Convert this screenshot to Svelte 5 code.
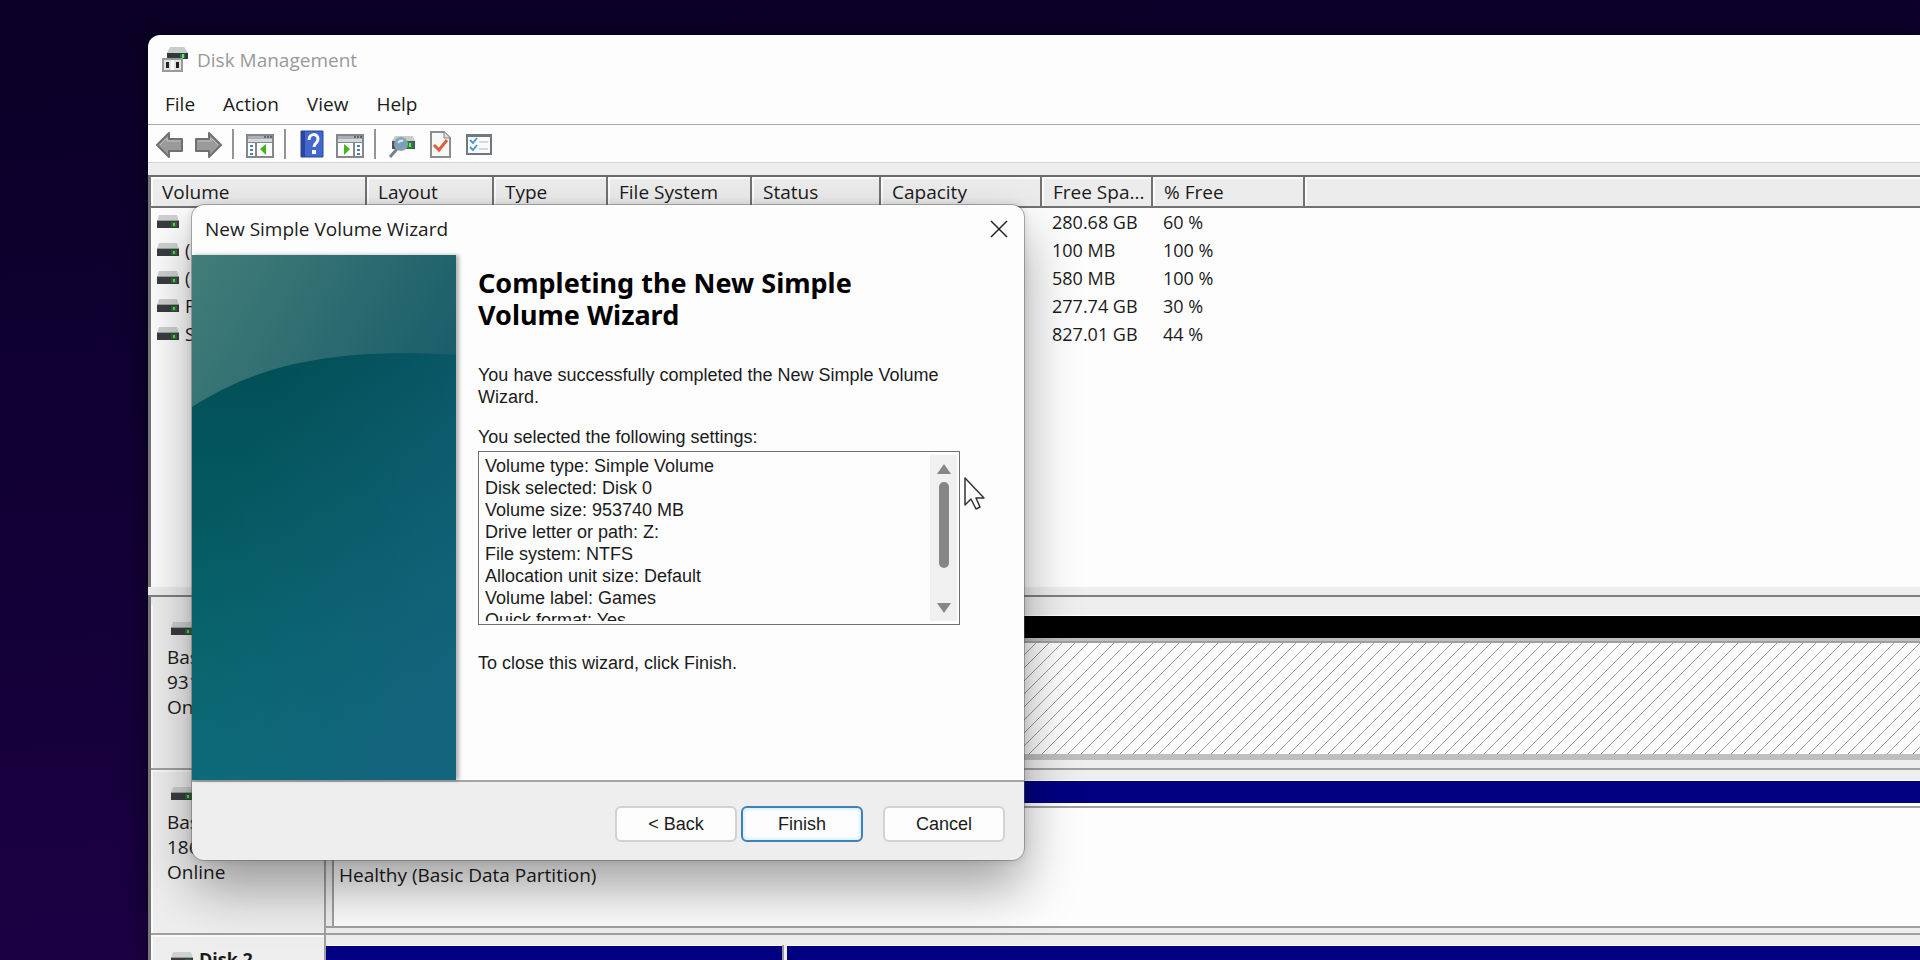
<script lang="ts">
  const menus = ['File', 'Action', 'View', 'Help'];

  const columns = [
    { label: 'Volume', width: 216 },
    { label: 'Layout', width: 127 },
    { label: 'Type', width: 114 },
    { label: 'File System', width: 144 },
    { label: 'Status', width: 129 },
    { label: 'Capacity', width: 161 },
    { label: 'Free Spa...', width: 111 },
    { label: '% Free', width: 152 },
  ];

  const volumes = [
    { name: '', free: '280.68 GB', percent: '60 %' },
    { name: '(', free: '100 MB', percent: '100 %' },
    { name: '(', free: '580 MB', percent: '100 %' },
    { name: 'F', free: '277.74 GB', percent: '30 %' },
    { name: 'S', free: '827.01 GB', percent: '44 %' },
  ];

  const settings = [
    'Volume type: Simple Volume',
    'Disk selected: Disk 0',
    'Volume size: 953740 MB',
    'Drive letter or path: Z:',
    'File system: NTFS',
    'Allocation unit size: Default',
    'Volume label: Games',
    'Quick format: Yes',
  ];
</script>

{#snippet drive()}
  <svg class="drive" viewBox="0 0 22 14" aria-hidden="true">
    <path d="M2 0h18l2 6H0z" fill="#cfd1d1" />
    <path d="M0 6h22v7H0z" fill="#3a3d3f" />
    <path d="M0 5h22v1H0z" fill="#9b9e9f" />
    <path d="M14 7h6v5h-6z" fill="#2c6a30" />
    <path d="M16 8h2v3h-2z" fill="#55d858" />
  </svg>
{/snippet}

{#snippet consolePane(flip: boolean)}
  <svg viewBox="0 0 28 28" aria-hidden="true">
    <path d="M1 5h26v22H1z" fill="#fdfdfd" stroke="#84888c" stroke-width="2" />
    <path d="M2 6h24v3H2z" fill="#a9b0b8" />
    <path d="M18 6h2v2h-2zM21 6h2v2h-2zM24 6h2v2h-2z" fill="#5f666e" />
    <path d="M2 9h24v4H2z" fill="#d5d8db" />
    <path d="M2 12h24v1H2z" fill="#84888c" />
    {#if flip}
      <path d="M17 13h2v13h-2z" fill="#84888c" />
      <path d="M21 15h3v2h-3zM21 19h3v2h-3zM21 23h3v2h-3z" fill="#4b7fc4" />
      <path d="M8 14l6 5-6 6z" fill="#43b51c" />
    {:else}
      <path d="M9 13h2v13H9z" fill="#84888c" />
      <path d="M4 15h3v2H4zM4 19h3v2H4zM4 23h3v2H4z" fill="#4b7fc4" />
      <path d="M20 14l-6 5 6 6z" fill="#43b51c" />
    {/if}
  </svg>
{/snippet}

<main class="desktop">
  <section class="window" aria-label="Disk Management">
    <header class="title-bar">
      <svg class="app-icon" viewBox="0 0 28 28" aria-hidden="true">
        <path d="M9 1h14l4 6H6z" fill="#c9cdcc" />
        <path d="M6 7h21v6H6z" fill="#33393a" />
        <path d="M19 8h5v4h-5z" fill="#227a35" />
        <path d="M21 8h2v4h-2z" fill="#5de37a" />
        <path d="M2 13h19v12H2z" fill="#e2e2e2" stroke="#9a9a9a" stroke-width="2" />
        <path d="M5 16h3v6H5zM15 16h3v6h-3z" fill="#222" />
        <path d="M10 14h3v10h-3z" fill="#fff" />
      </svg>
      <span>Disk Management</span>
    </header>

    <nav class="menu-bar">
      {#each menus as menu}
        <button type="button">{menu}</button>
      {/each}
    </nav>

    <div class="toolbar" role="toolbar" aria-label="Tools">
      <button type="button" aria-label="Back">
        <svg viewBox="0 0 28 28" aria-hidden="true">
          <path d="M1 15L13 3v6h13v12H13v6z" fill="#9a9a9a" stroke="#707070" stroke-width="2" stroke-linejoin="round" />
          <path d="M4 15l7-7v3h13" fill="none" stroke="#c2c2c2" stroke-width="1" />
        </svg>
      </button>
      <button type="button" aria-label="Forward">
        <svg viewBox="0 0 28 28" aria-hidden="true">
          <path d="M27 15L15 3v6H2v12h13v6z" fill="#9a9a9a" stroke="#707070" stroke-width="2" stroke-linejoin="round" />
          <path d="M24 15l-7-7v3H4" fill="none" stroke="#c2c2c2" stroke-width="1" />
        </svg>
      </button>
      <span class="separator"></span>
      <button type="button" aria-label="Show console tree">{@render consolePane(false)}</button>
      <span class="separator"></span>
      <button type="button" aria-label="Help">
        <svg viewBox="0 0 28 28" aria-hidden="true">
          <path d="M3 1h22v26H3z" fill="#4467cf" />
          <path d="M3 1h4v26H3z" fill="#2a469f" />
          <path d="M3 1h22v26H3z" fill="none" stroke="#2b4596" stroke-width="1" />
          <path d="M11 10c0-7 9-7 9-1 0 4-4 4-4 8" fill="none" stroke="#fff" stroke-width="3" />
          <path d="M14 20h4v4h-4z" fill="#fff" />
        </svg>
      </button>
      <button type="button" aria-label="Show action pane">{@render consolePane(true)}</button>
      <span class="separator"></span>
      <button type="button" aria-label="Rescan disks">
        <svg viewBox="0 0 28 28" aria-hidden="true">
          <path d="M7 6h18l2 5H4z" fill="#c8cccd" />
          <path d="M4 11h23v8H4z" fill="#4c5558" />
          <path d="M19 12h6v6h-6z" fill="#1f8a32" />
          <path d="M21 13h2v4h-2z" fill="#67e46e" />
          <path d="M2 27l7-8" stroke="#7a8288" stroke-width="3" />
          <circle cx="13" cy="14" r="6" fill="#86b2d2" fill-opacity=".8" stroke="#8fa0ac" stroke-width="2" />
          <path d="M10 13q2-3 5-2" fill="none" stroke="#d5e9f6" stroke-width="2" />
        </svg>
      </button>
      <button type="button" aria-label="Properties">
        <svg viewBox="0 0 28 28" aria-hidden="true">
          <path d="M5 2h13l6 6v19H5z" fill="#f8f8f8" stroke="#8d8d8d" stroke-width="2" />
          <path d="M18 2v6h6" fill="#ddd" stroke="#858585" stroke-width="1" />
          <path d="M8 15l5 5 8-10" fill="none" stroke="#dc6038" stroke-width="3" />
        </svg>
      </button>
      <button type="button" aria-label="Options">
        <svg viewBox="0 0 28 28" aria-hidden="true">
          <path d="M3 5h24v19H3z" fill="#fbfbfb" stroke="#6f7880" stroke-width="2" />
          <path d="M3 4h24v3H3z" fill="#6f7880" />
          <path d="M6 10l3 3 4-5M6 17l3 3 4-5" fill="none" stroke="#4f9ad2" stroke-width="2" />
          <path d="M15 12h9M15 19h9" stroke="#b5b5b5" stroke-width="1" />
        </svg>
      </button>
    </div>

    <div class="content">
      <div class="volume-list">
        <table>
          <colgroup>
            {#each columns as column}
              <col style="width: {column.width}px" />
            {/each}
            <col />
          </colgroup>
          <thead>
            <tr>
              {#each columns as column}
                <th scope="col">{column.label}</th>
              {/each}
              <td></td>
            </tr>
          </thead>
          <tbody>
            {#each volumes as volume}
              <tr>
                <td class="name">{@render drive()}<span>{volume.name}</span></td>
                <td colspan="5"></td>
                <td>{volume.free}</td>
                <td>{volume.percent}</td>
                <td></td>
              </tr>
            {/each}
          </tbody>
        </table>
      </div>

      <div class="disks">
        <div class="disk">
          <div class="disk-label">
            <h2>{@render drive()}</h2>
            <p>Basic</p>
            <p>931</p>
            <p>Online</p>
          </div>
          <div class="partitions">
            <div class="partition unallocated">
              <div class="bar"></div>
              <div class="body">
                <svg class="hatch" aria-hidden="true">
                  <defs>
                    <pattern id="hatch" width="13" height="13" patternUnits="userSpaceOnUse">
                      <path d="M0 13L13 0M-1 1L1-1M12 14L14 12" stroke="#999" stroke-width="1" />
                    </pattern>
                  </defs>
                  <rect width="100%" height="100%" fill="url(#hatch)" />
                </svg>
              </div>
            </div>
          </div>
        </div>
        <div class="disk">
          <div class="disk-label">
            <h2>{@render drive()}</h2>
            <p>Basic</p>
            <p>186</p>
            <p>Online</p>
          </div>
          <div class="partitions">
            <div class="partition">
              <div class="bar"></div>
              <div class="body healthy">Healthy (Basic Data Partition)</div>
            </div>
          </div>
        </div>
        <div class="disk">
          <div class="disk-label">
            <h2>{@render drive()}<span>Disk 2</span></h2>
          </div>
          <div class="partitions">
            <div class="partition narrow">
              <div class="bar"></div>
            </div>
            <div class="partition">
              <div class="bar"></div>
            </div>
          </div>
        </div>
      </div>
    </div>
  </section>

  <div class="wizard" role="dialog" aria-labelledby="wizard-title">
    <header>
      <span id="wizard-title">New Simple Volume Wizard</span>
      <button type="button" class="close" aria-label="Close">
        <svg viewBox="0 0 18 18" aria-hidden="true">
          <path d="M1 1l16 16M17 1L1 17" stroke="#222" stroke-width="1.5" />
        </svg>
      </button>
    </header>

    <div class="wizard-page">
      <svg class="banner" viewBox="0 0 264 525" preserveAspectRatio="none" aria-hidden="true">
        <defs>
          <linearGradient id="sky" x1="0" y1="0" x2="264" y2="150" gradientUnits="userSpaceOnUse">
            <stop offset="0" stop-color="#427d78" />
            <stop offset="1" stop-color="#175b69" />
          </linearGradient>
          <linearGradient id="hill" x1="0" y1="0" x2="0" y2="1">
            <stop offset="0" stop-color="#024f56" />
            <stop offset=".4" stop-color="#045a60" />
            <stop offset="1" stop-color="#087075" />
          </linearGradient>
          <linearGradient id="hill-side" x1="0" y1=".25" x2=".8" y2="1">
            <stop offset=".1" stop-color="#145f7a" stop-opacity="0" />
            <stop offset="1" stop-color="#14637e" stop-opacity=".9" />
          </linearGradient>
        </defs>
        <path d="M0 0h264v525H0z" fill="url(#sky)" />
        <path d="M0 152C60 114 130 92 264 100v425H0z" fill="url(#hill)" />
        <path d="M0 152C60 114 130 92 264 100v425H0z" fill="url(#hill-side)" />
      </svg>

      <div class="wizard-text">
        <h1>Completing the New Simple Volume Wizard</h1>
        <p class="intro">You have successfully completed the New Simple Volume Wizard.</p>
        <p id="settings-label">You selected the following settings:</p>
        <div class="settings" role="group" aria-labelledby="settings-label">
          <ul>
            {#each settings as setting}
              <li>{setting}</li>
            {/each}
          </ul>
          <div class="scrollbar">
            <svg viewBox="0 0 14 10" aria-hidden="true"><path d="M7 0l7 10H0z" fill="#868686" /></svg>
            <div class="thumb"></div>
            <svg viewBox="0 0 14 10" aria-hidden="true"><path d="M0 0h14L7 10z" fill="#868686" /></svg>
          </div>
        </div>
        <p>To close this wizard, click Finish.</p>
      </div>
    </div>

    <footer>
      <button type="button">&lt; Back</button>
      <button type="button" class="default">Finish</button>
      <button type="button" class="cancel">Cancel</button>
    </footer>
  </div>

  <svg class="cursor" viewBox="0 0 22 33" aria-hidden="true">
    <path d="M2 1v27l6-6 5 10 4-2-4-9h8z" fill="#fff" stroke="#333" stroke-width="1.5" stroke-linejoin="round" />
  </svg>
</main>

<style>
  :global(body) {
    margin: 0;
  }

  .desktop {
    position: relative;
    display: flex;
    box-sizing: border-box;
    height: 100vh;
    padding: 35px 0 0 148px;
    overflow: hidden;
    background: linear-gradient(175deg, #0b0026, #0e0030 30%, #1e0047);
    color: #1b1b1b;
    font-family: "Open Sans", "Noto Sans", sans-serif;
    font-size: 19px;
  }

  h1,
  h2,
  p,
  ul {
    margin: 0;
    padding: 0;
  }

  button {
    padding: 0;
    border: 0;
    background: none;
    color: inherit;
    font: inherit;
  }

  svg {
    display: block;
  }

  .window {
    display: flex;
    flex: 1;
    flex-direction: column;
    min-width: 0;
    overflow: hidden;
    border-radius: 12px 0 0 0;
    background: #fdfdfd;
    box-shadow: 0 0 24px rgba(0, 0, 0, .5);
  }

  .title-bar {
    display: flex;
    align-items: center;
    gap: 8px;
    height: 50px;
    padding-left: 13px;
    color: #999;
  }

  .app-icon {
    width: 28px;
    height: 28px;
  }

  .menu-bar {
    display: flex;
    gap: 28px;
    height: 39px;
    padding-left: 17px;
    border-bottom: 1px solid #a8a8a8;
  }

  .menu-bar button {
    height: 37px;
  }

  .toolbar {
    display: flex;
    align-items: center;
    gap: 10px;
    height: 37px;
    padding-left: 8px;
    border-bottom: 1px solid #d4d4d4;
  }

  .toolbar svg {
    width: 28px;
    height: 28px;
  }

  .separator {
    width: 2px;
    height: 30px;
    margin-right: 2px;
    background: #949494;
  }

  .content {
    display: flex;
    flex: 1;
    flex-direction: column;
    min-height: 0;
    padding-top: 12px;
    background: #eee;
  }

  .volume-list {
    box-sizing: border-box;
    height: 412px;
    margin-bottom: 8px;
    border-top: 2px solid #6b6b6b;
    border-left: 3px solid #777;
    background: #fdfdfd;
  }

  table {
    width: 100%;
    border-collapse: separate;
    border-spacing: 0;
    table-layout: fixed;
  }

  th,
  thead td {
    box-sizing: border-box;
    height: 31px;
    padding: 0 0 0 11px;
    border-right: 2px solid #727272;
    border-bottom: 2px solid #727272;
    background: #ececec;
    box-shadow: inset 2px 2px #fbfbfb;
    font-weight: 400;
    text-align: left;
    white-space: nowrap;
  }

  thead td {
    border-right: 0;
  }

  tbody td {
    height: 28px;
    padding: 0 0 0 10px;
    font-size: 18px;
    line-height: 28px;
    white-space: nowrap;
  }

  tbody td.name {
    display: flex;
    align-items: center;
    gap: 6px;
    padding-left: 6px;
  }

  .drive {
    width: 22px;
    height: 14px;
  }

  .disks {
    flex: 1;
    min-height: 0;
    overflow: hidden;
    border-top: 2px solid #808080;
    border-left: 3px solid #777;
  }

  .disk {
    display: flex;
    height: 165px;
  }

  .disk:first-child {
    padding-top: 8px;
  }

  .disk-label {
    box-sizing: border-box;
    width: 175px;
    padding: 12px 0 0 16px;
    border-right: 2px solid #a0a0a0;
    border-bottom: 2px solid #a0a0a0;
    box-shadow: inset 2px 2px #fafafa;
  }

  .disk:first-child .disk-label {
    box-shadow: inset 2px 0 #fafafa;
  }

  .disk-label h2 {
    display: flex;
    align-items: center;
    gap: 6px;
    height: 24px;
    margin-bottom: 4px;
    padding-left: 4px;
    font-size: 18px;
    line-height: 24px;
  }

  .disk-label p {
    line-height: 25px;
  }

  .partitions {
    display: flex;
    flex: 1;
    box-sizing: border-box;
    padding-top: 10px;
    border-bottom: 2px solid #a0a0a0;
  }

  .partition {
    display: flex;
    flex: 1;
    flex-direction: column;
    margin-bottom: 5px;
    border-bottom: 2px solid #a0a0a0;
  }

  .partition.narrow {
    flex: 0 0 456px;
    border-right: 2px solid #999;
    margin-right: 3px;
  }

  .bar {
    flex: none;
    height: 22px;
    border: solid #fff;
    border-width: 1px 0 3px;
    background: #000080;
    background-clip: padding-box;
  }

  .body {
    display: flex;
    flex: 1;
    flex-direction: column;
    min-height: 0;
    margin-left: 6px;
    border: solid #a0a0a0;
    border-width: 2px 0 0 2px;
    background: #fdfdfd;
  }

  .healthy {
    padding: 54px 0 0 5px;
  }

  .unallocated {
    margin-bottom: 8px;
    border-bottom: 6px solid #bebebe;
  }

  .unallocated .bar {
    border-bottom-color: #bebebe;
    background-color: #000;
  }

  .hatch {
    flex: 1;
    width: 100%;
    height: 0;
    min-height: 0;
  }

  .wizard {
    position: absolute;
    top: 205px;
    left: 192px;
    width: 832px;
    overflow: hidden;
    border-radius: 12px;
    outline: 1px solid rgba(90, 90, 90, .45);
    background: #fdfdfd;
    box-shadow: 0 28px 54px rgba(0, 0, 0, .36), 0 0 10px rgba(0, 0, 0, .14);
  }

  .wizard header {
    display: flex;
    align-items: center;
    justify-content: space-between;
    box-sizing: border-box;
    height: 50px;
    padding: 0 16px 2px 13px;
  }

  .close svg {
    width: 18px;
    height: 18px;
  }

  .wizard-page {
    display: flex;
    height: 525px;
    border-bottom: 2px solid #a5a5a5;
    font-family: "Liberation Sans", Arial, sans-serif;
    font-size: 18px;
    line-height: 22px;
  }

  .banner {
    width: 264px;
    height: 525px;
    flex: none;
    box-shadow: 3px 0 4px rgba(0, 0, 0, .3);
  }

  .wizard-text {
    width: 482px;
    padding: 12px 0 0 22px;
  }

  h1 {
    color: #000;
    font-family: "Noto Sans", sans-serif;
    font-size: 27px;
    line-height: 32px;
  }

  .intro {
    margin: 33px 0 18px;
  }

  .settings {
    display: flex;
    box-sizing: border-box;
    height: 174px;
    margin: 3px 0 27px;
    padding: 3px 2px 3px 4px;
    border: 1px solid #707070;
  }

  .settings ul {
    flex: 1;
    overflow: hidden;
    list-style: none;
  }

  .settings li {
    padding-left: 2px;
  }

  .scrollbar {
    display: flex;
    flex-direction: column;
    align-items: center;
    width: 27px;
    padding: 9px 0 8px;
    background: #f0f0f0;
  }

  .scrollbar svg {
    width: 14px;
    height: 10px;
  }

  .thumb {
    width: 10px;
    height: 86px;
    margin: 8px 0 auto;
    border-radius: 5px;
    background: #868686;
  }

  footer {
    display: flex;
    gap: 4px;
    justify-content: flex-end;
    padding: 24px 19px 18px;
    background: #eee;
    font-family: "Liberation Sans", Arial, sans-serif;
    font-size: 18px;
  }

  footer button {
    box-sizing: border-box;
    width: 122px;
    height: 36px;
    border: 2px solid #d2d2d2;
    border-radius: 6px;
    background: #fdfdfd;
  }

  footer .default {
    border-color: #3a82b8;
    box-shadow: inset 0 0 4px #b5e0fa;
  }

  footer .cancel {
    margin-left: 16px;
  }

  .cursor {
    position: absolute;
    top: 477px;
    left: 963px;
    width: 22px;
    height: 33px;
  }
</style>
